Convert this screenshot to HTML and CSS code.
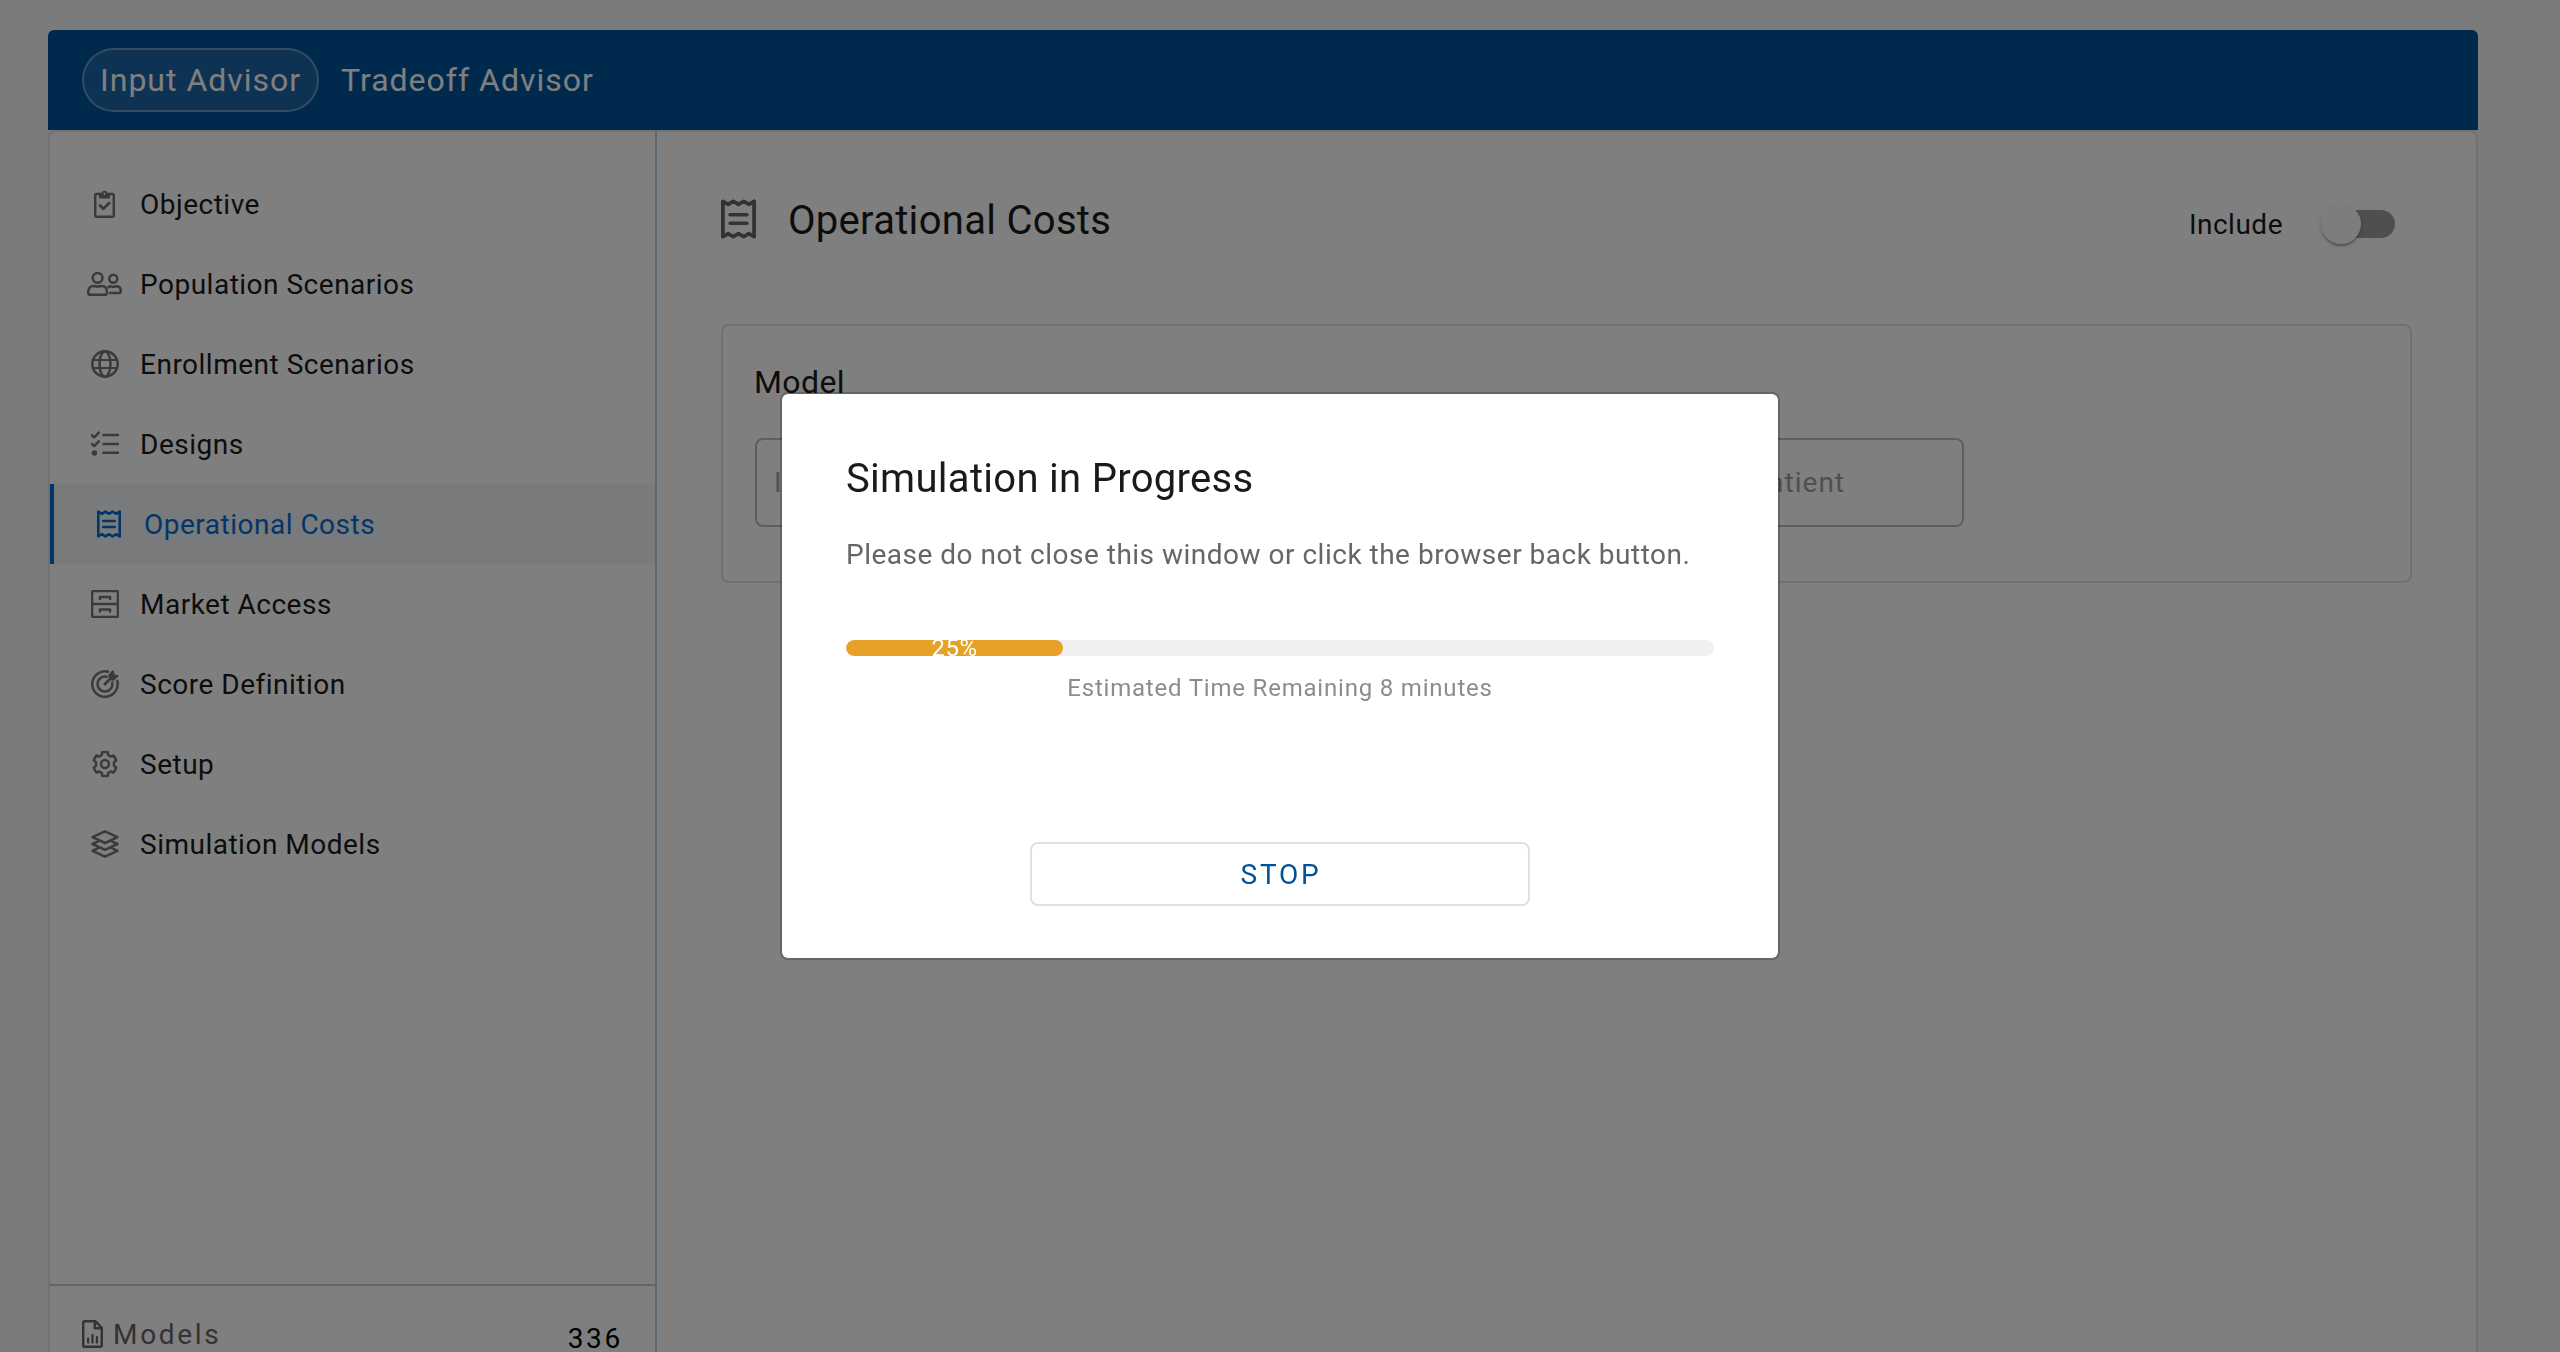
FILE: index.html
```html
<!DOCTYPE html>
<html lang="en">
<head>
<meta charset="utf-8">
<title>Operational Costs</title>
<link rel="stylesheet" href="styles.css">
</head>
<body>
<svg class="sprite" aria-hidden="true">
  <symbol id="i-receipt" viewBox="0 0 24 28">
    <path d="M1.3 1.6 4.9 3.8 8.4 1.6 12 3.8 15.6 1.6 19.1 3.8 22.7 1.6V26.4L19.1 24.2 15.6 26.4 12 24.2 8.4 26.4 4.9 24.2 1.3 26.4Z" stroke-width="2.6"/>
    <path d="M6.2 11H17.8M6.2 17H17.8" stroke-width="2.4"/>
  </symbol>
</svg>

<div class="app">
  <header class="topbar">
    <a class="tab tab-active">Input Advisor</a>
    <a class="tab">Tradeoff Advisor</a>
  </header>
  <div class="panel">
    <aside class="sidebar">
      <nav class="nav">
        <a class="item"><span class="icon"><svg width="21" height="28" viewBox="0 0 21 28"><rect x="1.2" y="4.1" width="18.6" height="22.7" rx="1.4"/><path class="solid" d="M5 3.6H7.6A2.9 2.9 0 0 1 13.4 3.6H16V7.4A1 1 0 0 1 15 8.4H6A1 1 0 0 1 5 7.4Z"/><circle class="hole" cx="10.5" cy="3.7" r="1"/><path d="M6 15.6 9.3 18.8 15.2 13" stroke-width="2.8"/></svg></span><span class="label">Objective</span></a>
        <a class="item"><span class="icon"><svg width="35" height="28" viewBox="0 0 35 28"><circle cx="10.6" cy="7.8" r="4.9"/><circle cx="26.3" cy="8.7" r="4"/><path d="M1.2 22.5C1.2 18.2 3.4 15.9 6.6 15.9 8.3 15.9 8.7 16.6 10.6 16.6S12.9 15.9 14.6 15.9C17.8 15.9 20 18.2 20 22.5V23C20 24 19.4 24.7 18.4 24.7H2.8C1.8 24.7 1.2 24 1.2 23Z"/><path d="M21.5 17.2C22.4 16.4 23 16.3 23.8 16.3 25 16.3 25.3 16.8 26.4 16.8S28 16.3 29.2 16.3C31.9 16.3 33.8 18.2 33.8 21.2 33.8 22.4 33.2 23.1 32.1 23.1H23"/></svg></span><span class="label">Population Scenarios</span></a>
        <a class="item"><span class="icon"><svg width="28" height="28" viewBox="0 0 28 28"><circle cx="14" cy="14" r="12.7"/><ellipse cx="14" cy="14" rx="5.5" ry="12.7"/><path d="M2 10H26M2 18H26" stroke-width="2.2"/></svg></span><span class="label">Enrollment Scenarios</span></a>
        <a class="item"><span class="icon"><svg width="28" height="28" viewBox="0 0 28 28"><path d="M.8 5.2 3.2 7.3 7.8 2.6M.8 14 3.2 16.1 7.8 11.4"/><circle class="solid" cx="3.4" cy="23" r="2.7"/><path d="M11.4 5H28M11.4 13.9H28M11.4 22.8H28" stroke-linecap="butt"/></svg></span><span class="label">Designs</span></a>
        <a class="item item-active"><span class="icon"><svg width="24" height="28"><use href="#i-receipt"/></svg></span><span class="label">Operational Costs</span></a>
        <a class="item"><span class="icon"><svg width="28" height="28" viewBox="0 0 28 28"><rect x="1.1" y="1.1" width="25.8" height="25.8" rx="1.4"/><path d="M1 14H27M8.9 9V7.1H19.1V9M8.9 21.4V19.5H19.1V21.4"/></svg></span><span class="label">Market Access</span></a>
        <a class="item"><span class="icon"><svg width="28" height="28" viewBox="0 0 28 28"><path d="M17 1.7A12.7 12.7 0 1 0 26.3 11"/><path d="M15.6 6.7A7.5 7.5 0 1 0 21.3 12.4"/><path d="M14 14 20 8" stroke-width="3"/><path class="solid" d="M17.2 5.1 21.4.6Q22.4-.2 22.8.9L23.6 4.4 27.1 5.2Q28.2 5.6 27.4 6.6L22.9 10.8 18.3 9.7Z"/></svg></span><span class="label">Score Definition</span></a>
        <a class="item"><span class="icon"><svg width="28" height="28" viewBox="0 0 28 28"><circle cx="14" cy="14" r="4"/><path d="M11.2 2.2Q14 1.6 16.8 2.2L17.3 5.2 19.6 6.5 22.4 5.5Q24.3 7.4 25.2 10.3L22.9 12.4V15.6L25.2 17.7Q24.3 20.6 22.4 22.5L19.6 21.5 17.3 22.8 16.8 25.8Q14 26.4 11.2 25.8L10.7 22.8 8.4 21.5 5.6 22.5Q3.7 20.6 2.8 17.7L5.1 15.6V12.4L2.8 10.3Q3.7 7.4 5.6 5.5L8.4 6.5 10.7 5.2Z"/></svg></span><span class="label">Setup</span></a>
        <a class="item"><span class="icon"><svg width="28" height="28" viewBox="0 0 28 28"><path d="M14 1.4 26.5 7.2 14 13 1.5 7.2ZM7.2 11.4 1.5 14 14 19.8 26.5 14 20.8 11.4M7.2 18.2 1.5 20.8 14 26.6 26.5 20.8 20.8 18.2"/></svg></span><span class="label">Simulation Models</span></a>
      </nav>
      <footer class="summary">
        <svg class="icon-dark" width="21" height="28" viewBox="0 0 21 28"><path d="M3 1.2H13.2L19.8 7.8V25.4A1.4 1.4 0 0 1 18.4 26.8H2.6A1.4 1.4 0 0 1 1.2 25.4V3A1.8 1.8 0 0 1 3 1.2ZM12.8 1.5V8.2H19.6"/><path d="M6.1 18.6V22.6M10.5 14.8V22.6M14.9 16.8V22.6" stroke-width="2.2"/></svg>
        <span class="summary-label">Models</span>
        <span class="summary-count">336</span>
      </footer>
    </aside>
    <main class="content">
      <div class="heading">
        <svg class="icon-dark" width="35" height="40" viewBox="0 0 24 28" preserveAspectRatio="none"><use href="#i-receipt"/></svg>
        <h1>Operational Costs</h1>
        <div class="include">
          <span class="label">Include</span>
          <span class="switch"><span class="thumb"></span></span>
        </div>
      </div>
      <section class="card">
        <h2>Model</h2>
        <div class="fields">
          <div class="field">Initial</div>
          <div class="field"></div>
          <div class="field">Cost per Patient</div>
        </div>
      </section>
    </main>
  </div>
</div>

<div class="overlay">
  <div class="dialog" role="dialog">
    <h3>Simulation in Progress</h3>
    <p class="message">Please do not close this window or click the browser back button.</p>
    <div class="track"><div class="bar" style="width: 25%">25%</div></div>
    <p class="remaining">Estimated Time Remaining 8 minutes</p>
    <button class="stop">STOP</button>
  </div>
</div>
</body>
</html>
```
FILE: styles.css
```css
* { box-sizing: border-box; }

body {
  margin: 0;
  height: 1352px;
  overflow: hidden;
  background: #f4f6fa;
  font: 28px/40px Roboto, sans-serif;
  letter-spacing: .5px;
  color: #1a1a1a;
}

h1, h2, h3, p { margin: 0; font-weight: 400; }

svg {
  display: block;
  flex: none;
  fill: none;
  stroke: currentColor;
  stroke-width: 2.5;
  stroke-linejoin: round;
  stroke-linecap: round;
}
.solid { fill: currentColor; stroke: none; }
.hole { fill: #fff; stroke: none; }
.sprite { display: none; }
.label { padding-top: 2px; }

.app {
  display: flex;
  flex-direction: column;
  width: 2430px;
  height: 1352px;
  margin-left: 48px;
  padding-top: 30px;
}

.topbar {
  display: flex;
  flex: none;
  align-items: center;
  gap: 22px;
  height: 100px;
  padding-left: 34px;
  border-radius: 6px 6px 0 0;
  background: #00549a;
}
.tab { font-size: 32px; letter-spacing: 1px; color: #fff; }
.tab-active {
  width: 237px;
  height: 64px;
  padding-left: 16px;
  line-height: 60px;
  border: 2px solid rgba(255, 255, 255, .4);
  border-radius: 32px;
  background: rgba(255, 255, 255, .12);
  background: #1c64a6;
  background-clip: padding-box;
}

.panel {
  display: flex;
  flex: 1;
  min-height: 0;
  border: 2px solid #e4e4e4;
  border-bottom: 0;
  border-radius: 8px 8px 0 0;
  background: #fff;
}

.sidebar {
  display: flex;
  flex: none;
  flex-direction: column;
  justify-content: space-between;
  width: 607px;
  border-right: 2px solid #b6cfe6;
}
.nav { padding-top: 32px; }
.item {
  display: flex;
  align-items: center;
  gap: 18px;
  height: 80px;
  padding-left: 37px;
}
.icon { display: flex; justify-content: center; width: 35px; color: #747474; }
.item-active { border-left: 4px solid #006cd2; background: #f0f4f8; }
.item-active, .item-active .icon { color: #006cd2; }
.icon-dark { color: #666; }

.summary {
  display: flex;
  align-items: flex-start;
  height: 68px;
  padding: 28px 32px 0 32px;
  border-top: 2px solid #b6cfe6;
  letter-spacing: 2.7px;
}
.summary svg { margin-top: 6px; }
.summary-label { margin: 1px 0 0 10px; color: #666; }
.summary-count { margin: 5px 0 0 auto; line-height: 34px; padding-top: 3px; height: 34px; color: #000; }

.content { flex: 1; padding: 56px 64px 0; }

.heading { display: flex; align-items: center; height: 62px; padding-right: 17px; }
.heading h1 { margin-left: 32px; padding-top: 3px; font-size: 40px; letter-spacing: .3px; }
.include { display: flex; align-items: center; gap: 44px; margin-left: auto; padding-top: 10px; }
.switch { display: flex; align-items: center; width: 68px; height: 28px; border-radius: 14px; background: #9e9e9e; }
.thumb {
  flex: none;
  width: 40px;
  height: 40px;
  margin-left: -6px;
  border-radius: 50%;
  background: #fafafa;
  box-shadow: 0 4px 2px -2px rgba(0, 0, 0, .2), 0 2px 2px rgba(0, 0, 0, .14), 0 2px 6px rgba(0, 0, 0, .12);
}

.card {
  height: 259px;
  margin-top: 74px;
  padding: 36px 32px;
  border: 2px solid #e0e0e0;
  border-radius: 8px;
}
.card h2 { margin: 0 0 36px -1px; font-size: 32px; letter-spacing: .4px; }
.fields { display: flex; gap: 75px; }
.field {
  width: 353px;
  height: 89px;
  padding-left: 17px;
  line-height: 85px;
  border: 2px solid #bdbdbd;
  border-radius: 8px;
  color: #9e9e9e;
  letter-spacing: 1px;
}
.field:last-child { padding: 0 117px 0 0; text-align: right; white-space: nowrap; }

.overlay {
  position: fixed;
  inset: 0;
  display: flex;
  align-items: center;
  justify-content: center;
  background: rgba(0, 0, 0, .5);
}
.dialog {
  display: flex;
  flex-direction: column;
  width: 1000px;
  height: 568px;
  padding: 61px 64px 0;
  border: 2px solid rgba(0, 0, 0, .2);
  border-radius: 8px;
  background: #fff;
  background-clip: padding-box;
}
.dialog h3 { font-size: 40px; line-height: 48px; letter-spacing: .3px; }
.message { margin-top: 32px; color: #666; letter-spacing: .5px; }
.track { height: 16px; margin-top: 65px; border-radius: 8px; overflow: hidden; background: #f0f0f0; }
.bar {
  height: 16px;
  border-radius: 8px;
  overflow: hidden;
  background: #e6a226;
  color: #fff;
  font-size: 24px;
  line-height: 17px;
  text-align: center;
}
.remaining { margin-top: 12px; font-size: 24px; letter-spacing: .8px; text-align: center; color: #8c8c8c; }
.stop {
  align-self: center;
  width: 500px;
  height: 64px;
  margin-top: 134px;
  padding: 2px 0 0 2px;
  border: 2px solid #e0e0e0;
  border-radius: 8px;
  background: #fff;
  font: inherit;
  letter-spacing: 2.8px;
  color: #00529b;
}
```
